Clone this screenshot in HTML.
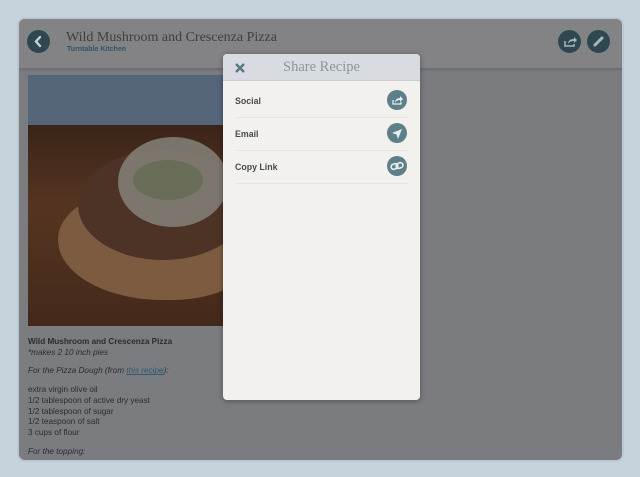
<!DOCTYPE html>
<html><head><meta charset="utf-8"><style>
*{margin:0;padding:0;box-sizing:border-box}
body{width:640px;height:477px;background:#c7d3dc;position:relative;overflow:hidden;font-family:"Liberation Sans",sans-serif}
.panel{position:absolute;left:17px;top:17px;width:607px;height:445px;border-radius:8px;background:#b9c9d4;padding:2px}
.inner{position:absolute;left:2px;top:2px;right:2px;bottom:2px;border-radius:6px;background:#7b7c80;overflow:hidden}
.hdr{position:absolute;left:0;top:0;right:0;height:50px;background:#838385;border-bottom:1px solid #6e6f72;box-shadow:0 1px 2px rgba(0,0,0,.15)}
.circ{position:absolute;width:23px;height:23px;border-radius:50%;background:#2d4850}
.title{position:absolute;left:47px;top:11px;font-family:"Liberation Serif",serif;font-size:14px;color:#3e3f41}
.sub{position:absolute;left:48px;top:27px;font-size:7px;font-weight:bold;color:#2e5666}
.img{position:absolute;left:9px;top:56px;width:195px;height:251px;background:#4a2c1c;overflow:hidden}
.txt{position:absolute;left:9px;top:318px;font-size:8.2px;color:#2b2c2e;line-height:10.7px}
.modal{position:absolute;left:223px;top:54px;width:197px;height:346px;border-radius:4px;background:#f2f1ed;box-shadow:0 1px 6px rgba(0,0,0,.35);overflow:hidden}
.mh{height:27px;background:#d8dce0;border-bottom:1px solid #c9cdd1;position:relative}
.mh .t{position:absolute;left:0;right:0;top:5px;text-align:center;font-family:"Liberation Serif",serif;font-size:14.5px;color:#8c959b}
.row{position:absolute;left:12px;right:12px;height:33px;border-bottom:1px solid #e6e5e1;font-size:8.8px;font-weight:bold;color:#4a4b4d}
.row span{position:absolute;left:0;top:11px}
.ic{position:absolute;right:1px;top:5px;width:20px;height:20px;border-radius:50%;background:#5d7f89}
</style></head><body>
<div class="panel"><div class="inner">
<div class="hdr">
 <div class="circ" style="left:8px;top:11px"><svg width="23" height="23"><path d="M13 7 L9 11.5 L13 16" stroke="#c8d2d6" stroke-width="2.4" fill="none" stroke-linecap="round"/></svg></div>
 <div class="title">Wild Mushroom and Crescenza Pizza</div>
 <div class="sub">Turntable Kitchen</div>
 <div class="circ" style="left:539px;top:11px"><svg width="23" height="23"><path d="M7 11v5h9v-2" stroke="#a9b6ba" stroke-width="1.5" fill="none"/><path d="M10 14c0-3 2-5 6-5v-2l3 3-3 3v-2c-3 0-5 1-6 3z" fill="#a9b6ba"/></svg></div>
 <div class="circ" style="left:568px;top:11px"><svg width="23" height="23"><path d="M8 15 L15 8" stroke="#a9b6ba" stroke-width="3" stroke-linecap="round"/><path d="M6.5 16.5l1-2.5 1.5 1.5z" fill="#a9b6ba"/></svg></div>
</div>
<div class="img">
 <div style="position:absolute;left:0;top:0;width:195px;height:50px;background:#55657a"></div>
 <div style="position:absolute;left:0;top:50px;width:195px;height:201px;background:linear-gradient(#3a2418,#553521 40%,#43291a)"></div>
 <div style="position:absolute;left:30px;top:110px;width:200px;height:115px;border-radius:50% 40% 45% 55%;background:#7d5b40"></div>
 <div style="position:absolute;left:50px;top:75px;width:170px;height:110px;border-radius:50%;background:#4d3325"></div>
 <div style="position:absolute;left:90px;top:62px;width:110px;height:90px;border-radius:50%;background:#8e8e86;opacity:.75"></div>
 <div style="position:absolute;left:105px;top:85px;width:70px;height:40px;border-radius:50%;background:#4a6236;opacity:.4"></div>
</div>
<div class="txt">
<b>Wild Mushroom and Crescenza Pizza</b><br><i>*makes 2 10 inch pies</i><br><div style="height:8px"></div>
<i>For the Pizza Dough (from <u style="color:#2d5a6e">this recipe</u>):</i><br><div style="height:8px"></div>
extra virgin olive oil<br>1/2 tablespoon of active dry yeast<br>1/2 tablespoon of sugar<br>1/2 teaspoon of salt<br>3 cups of flour<br><div style="height:8px"></div>
<i>For the topping:</i>
</div>
</div></div>
<div class="modal">
 <div class="mh"><svg style="position:absolute;left:11px;top:8px" width="12" height="12"><path d="M2 2L10 10M10 2L2 10" stroke="#587780" stroke-width="2.3"/></svg><div class="t">Share Recipe</div></div>
 <div class="row" style="top:31px"><span>Social</span><div class="ic"><svg width="20" height="20"><path d="M6 10v4h8v-2" stroke="#e8eeef" stroke-width="1.3" fill="none"/><path d="M8 13c0-3 2-5 5-5v-2l3 3-3 3v-2c-2 0-4 1-5 3z" fill="#e8eeef"/></svg></div></div>
 <div class="row" style="top:64px"><span>Email</span><div class="ic"><svg width="20" height="20"><path d="M5 10l10-4-4 10-1.5-4.5z" fill="#e8eeef"/></svg></div></div>
 <div class="row" style="top:97px"><span>Copy Link</span><div class="ic"><svg width="20" height="20"><rect x="4" y="8" width="7" height="5" rx="2.5" stroke="#e8eeef" stroke-width="1.6" fill="none" transform="rotate(-20 7.5 10.5)"/><rect x="9" y="7" width="7" height="5" rx="2.5" stroke="#e8eeef" stroke-width="1.6" fill="none" transform="rotate(-20 12.5 9.5)"/></svg></div></div>
</div>
</body></html>
